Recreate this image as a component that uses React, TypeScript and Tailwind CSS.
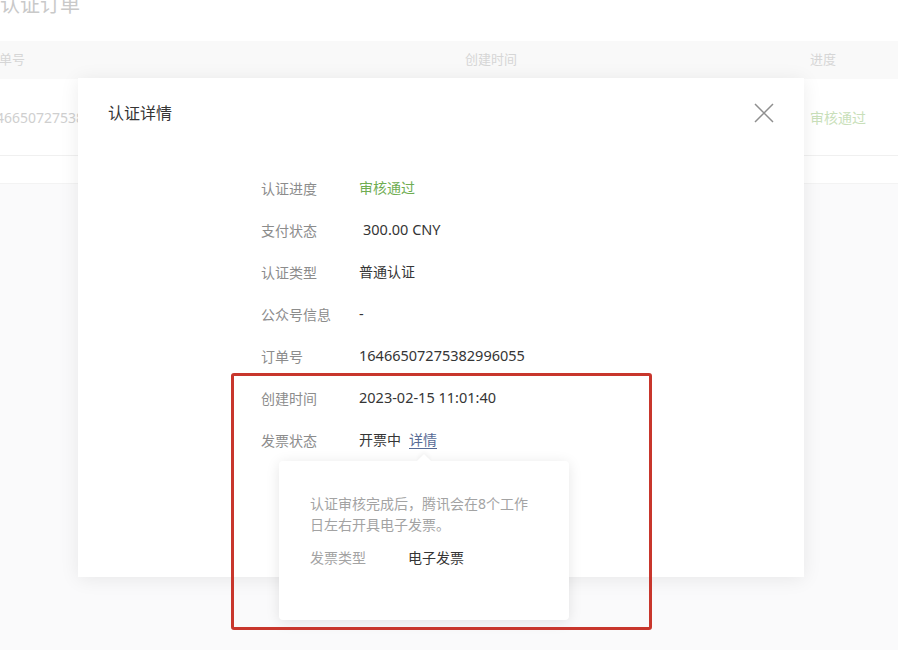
import React from "react";

const font = { fontFamily: '"Noto Sans", "Noto Sans CJK SC", sans-serif' };

function Row({ label, children }: { label: string; children: React.ReactNode }) {
  return (
    <div className="flex h-[42px] items-center text-[14px]">
      <div className="w-[98px] text-[#8c8c8c]">{label}</div>
      <div className="text-[14.5px] text-[#353535]">{children}</div>
    </div>
  );
}

export default function App() {
  return (
    <div className="relative h-[650px] w-[898px] overflow-hidden bg-[#fafafb]" style={font}>
      {/* background page */}
      <div className="h-[50px] bg-white">
        <div className="-mt-[9px] text-[20px] leading-[28px] text-[#c9c9c9]">认证订单</div>
      </div>
      <div className="bg-white">
        <div className="flex h-[38px] items-center bg-[#f9f9f9] pt-[0px] text-[13px] text-[#d6d6d6]">
          <div className="w-[465px] overflow-hidden"><span className="-ml-[14px] inline-block">订单号</span></div>
          <div className="w-[345px]">创建时间</div>
          <div className="flex-1">进度</div>
        </div>
        <div className="flex h-[77px] items-center border-b border-[#f0f0f0] text-[14px]">
          <div className="w-[465px] overflow-hidden whitespace-nowrap text-[#cfcfcf]"><span className="-ml-[20px] inline-block">16466507275382996055</span></div>
          <div className="w-[345px] text-[#d8d8d8]">2023-02-15 11:01:40</div>
          <div className="flex-1 text-[#c9dfba]">审核通过</div>
        </div>
        <div className="h-[28px] border-b border-[#f3f3f3]" />
      </div>

      {/* modal */}
      <div className="absolute left-[78px] top-[78px] h-[499px] w-[726px] bg-white px-[30px] pt-[24px] shadow-[0_2px_18px_rgba(0,0,0,0.08)]">
        <div className="flex items-center justify-between">
          <div className="text-[16px] leading-[22px] text-[#353535]">认证详情</div>
          <svg width="20" height="20" viewBox="0 0 20 20" className="-mt-[1px]">
            <path d="M1 1 L19 19 M19 1 L1 19" stroke="#8f8f8f" strokeWidth="1.5" fill="none" />
          </svg>
        </div>
        <div className="mt-[43px] pl-[153px]">
          <Row label="认证进度"><span className="text-[14px] text-[#6fad52]">审核通过</span></Row>
          <Row label="支付状态"><span className="pl-[4px]">300.00 CNY</span></Row>
          <Row label="认证类型"><span className="text-[14px]">普通认证</span></Row>
          <Row label="公众号信息">-</Row>
          <Row label="订单号">16466507275382996055</Row>
          <Row label="创建时间">2023-02-15 11:01:40</Row>
          <Row label="发票状态">
            <span className="text-[14px]">开票中</span>
            <span className="ml-[8px] text-[14px] text-[#576b95] underline underline-offset-[3px]">详情</span>
          </Row>
        </div>
      </div>

      {/* popover */}
      <div className="absolute left-[279px] top-[461px] h-[159px] w-[290px] rounded-[4px] bg-white px-[31px] pt-[32px] shadow-[0_2px_14px_rgba(0,0,0,0.1)]">
        <div className="absolute -top-[5px] left-[140px] h-[10px] w-[10px] rotate-45 bg-white shadow-[-2px_-2px_4px_rgba(0,0,0,0.04)]" />
        <div className="w-[222px] text-[14px] leading-[21px] text-[#a3a3a3]">认证审核完成后，腾讯会在8个工作日左右开具电子发票。</div>
        <div className="mt-[12px] flex text-[14px] leading-[21px]">
          <div className="w-[98px] text-[#a3a3a3]">发票类型</div>
          <div className="text-[#353535]">电子发票</div>
        </div>
      </div>

      {/* annotation */}
      <div className="absolute left-[231px] top-[373px] h-[257px] w-[421px] rounded-[3px] border-[3px] border-[#c8362c]" />
    </div>
  );
}
